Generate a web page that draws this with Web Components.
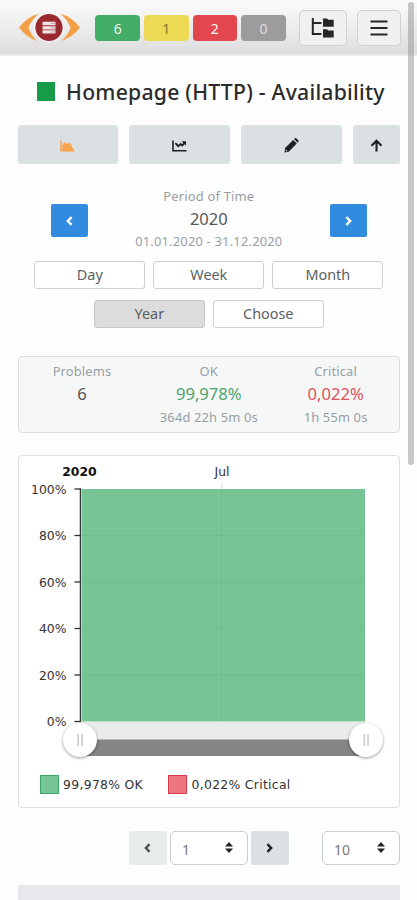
<!DOCTYPE html>
<html lang="en">
<head>
<meta charset="utf-8">
<meta name="viewport" content="width=device-width, initial-scale=1">
<title>Homepage (HTTP) - Availability</title>
<style>
  html, body {
    margin: 0;
    height: 100%;
    overflow: hidden;
    background: #fefefe;
  }
</style>
</head>
<body>
<monitor-app></monitor-app>

<script>
  class BaseElement extends HTMLElement {
    constructor() {
      super();
      this.attachShadow({ mode: "open" });
    }

    connectedCallback() {
      this.shadowRoot.innerHTML = this.render();
    }
  }

  const icons = {
    area: `<svg width="15" height="12" viewBox="0 0 15 12"><path d="M1 .5V10.8H14.5" fill="none" stroke="currentColor" stroke-width="1.5"/><path d="M2.4 10V5L4.6 2L7 4L9.6 2.6L11.4 5.4L13.6 10Z" fill="currentColor"/></svg>`,
    line: `<svg width="15" height="12" viewBox="0 0 15 12"><path d="M1 .5V10.8H14.5" fill="none" stroke="currentColor" stroke-width="1.6"/><path d="M3.4 3.2L6.2 6.2L8.6 4L10.2 5.4L12.6 3" fill="none" stroke="currentColor" stroke-width="1.8"/><path d="M9.6 1.2H14V5.6Z" fill="currentColor"/></svg>`,
    pencil: `<svg width="15" height="15" viewBox="0 0 15 15"><path d="M1 10L9.2 1.9L12.8 5.5L4.7 13.7L.6 14.4Z" fill="currentColor"/><path d="M10 1.1L11 .2Q11.8-.3 12.5 .4L14.3 2.2Q15 3 14.4 3.8L13.6 4.7Z" fill="currentColor"/><path d="M1.7 11.2L3.6 13.1L2 13.4Z" fill="#dbe1e3"/></svg>`,
    up: `<svg width="13" height="13" viewBox="0 0 13 13"><path d="M6.5 12.5V2M1.5 6.7L6.5 1.7L11.5 6.7" fill="none" stroke="currentColor" stroke-width="2.1"/></svg>`,
    left: `<svg width="7" height="10" viewBox="0 0 7 10"><path d="M5.6 1.2L1.9 5L5.6 8.8" fill="none" stroke="currentColor" stroke-width="2.5"/></svg>`,
    right: `<svg width="7" height="10" viewBox="0 0 7 10"><path d="M1.4 1.2L5.1 5L1.4 8.8" fill="none" stroke="currentColor" stroke-width="2.5"/></svg>`,
    tree: `<svg width="23" height="20" viewBox="0 0 23 20"><path d="M1.8 0V16H10.5M1.8 5H10.5" fill="none" stroke="currentColor" stroke-width="2"/><path d="M12 .6H16L17.2 1.8H22.7V8.8H12ZM12 11.2H16L17.2 12.4H22.7V19.4H12Z" fill="currentColor"/></svg>`,
    menu: `<svg width="18" height="16" viewBox="0 0 18 16"><path d="M.5 1.5H17.5M.5 8H17.5M.5 14.5H17.5" fill="none" stroke="currentColor" stroke-width="2.1"/></svg>`,
    sort: `<svg width="8" height="11" viewBox="0 0 8 11"><path d="M0 4.6L4 0L8 4.6ZM0 6.4L4 11L8 6.4Z" fill="currentColor"/></svg>`
  };

  class UiIcon extends BaseElement {
    render() {
      return `
        <style>
          :host { display: inline-flex; }
          svg { display: block; overflow: visible; }
        </style>
        ${icons[this.getAttribute("name")]}
      `;
    }
  }
  customElements.define("ui-icon", UiIcon);

  class AppLogo extends BaseElement {
    render() {
      return `
        <style>
          :host { display: block; width: 62px; height: 30px; }
          svg { display: block; }
        </style>
        <svg width="62" height="30" viewBox="0 0 62 30">
          <path d="M0 14.5Q8 4 20 .5Q13 6 9.5 14.5Q12.5 23 18 28Q7 24 0 14.5Z" fill="#f5a047"/>
          <path d="M61 14.5Q53 4 41 .5Q48 6 51.5 14.5Q48.5 23 42 28Q54 24 61 14.5Z" fill="#f5a047"/>
          <circle cx="30" cy="14.5" r="15" fill="#f6f3f3"/>
          <circle cx="30" cy="14.5" r="13.6" fill="#98292f"/>
          <path d="M23.5 8.7H36.5V12.3H23.5ZM23.5 13.2H36.5V16.4H23.5ZM23.5 17.3H36.5V20.6H23.5Z" fill="#f2e3e3"/>
          <path d="M32 10.5H36M32 14.8H36M32 19H36" stroke="#c99a9c" stroke-width=".8"/>
        </svg>
      `;
    }
  }
  customElements.define("app-logo", AppLogo);

  class StatusBadge extends BaseElement {
    render() {
      return `
        <style>
          :host {
            display: flex;
            align-items: center;
            justify-content: center;
            width: 44.6px;
            height: 26px;
            border-radius: 4px;
            background: var(--badge-bg);
            color: var(--badge-text, #eef6f0);
            font-size: 14px;
          }
        </style>
        <slot></slot>
      `;
    }
  }
  customElements.define("status-badge", StatusBadge);

  class AppHeader extends BaseElement {
    render() {
      return `
        <style>
          :host {
            display: flex;
            align-items: center;
            box-sizing: border-box;
            height: 56px;
            padding: 0 15px 0 19px;
            background: linear-gradient(#fcfcfc, #ececec 50%, #dedede 94%, #eee);
          }
          .badges { display: flex; gap: 4px; margin: 0 12.8px 0 14.4px; }
          .button {
            display: flex;
            align-items: center;
            justify-content: center;
            box-sizing: border-box;
            width: 48px;
            height: 36px;
            border: 1px solid #cfd2d4;
            border-radius: 5px;
            background: #f0f0f0;
            color: #262626;
          }
          .menu { width: 44px; margin-left: 10px; }
        </style>
        <app-logo></app-logo>
        <div class="badges">
          <status-badge style="--badge-bg: #41ad67">6</status-badge>
          <status-badge style="--badge-bg: #ecda55; --badge-text: #85792f">1</status-badge>
          <status-badge style="--badge-bg: #e2464f">2</status-badge>
          <status-badge style="--badge-bg: #9c9c9c; --badge-text: #ddd">0</status-badge>
        </div>
        <div class="button"><ui-icon name="tree"></ui-icon></div>
        <div class="button menu"><ui-icon name="menu"></ui-icon></div>
      `;
    }
  }
  customElements.define("app-header", AppHeader);

  class PageTitle extends BaseElement {
    render() {
      return `
        <style>
          :host {
            display: flex;
            align-items: center;
            height: 30px;
            margin: 21px 0 17.5px 19px;
            color: #2b2b2b;
            font-size: 21.2px;
            font-weight: 500;
            letter-spacing: .24px;
            white-space: nowrap;
          }
          .state { width: 18.5px; height: 19px; margin: 0 11px 1px 0; background: #169b48; }
          .text { margin-top: -2px; }
        </style>
        <span class="state"></span>
        <span class="text"><slot></slot></span>
      `;
    }
  }
  customElements.define("page-title", PageTitle);

  class ToolBar extends BaseElement {
    render() {
      return `
        <style>
          :host {
            display: grid;
            grid-template-columns: 1fr 1fr 1fr 47px;
            gap: 11px;
            height: 39px;
            color: #1d1f20;
          }
          div {
            display: flex;
            align-items: center;
            justify-content: center;
            padding-top: 3px;
            box-sizing: border-box;
            border-radius: 3px;
            background: #dbe1e3;
          }
          .active { color: #f9a14b; }
        </style>
        <div class="active"><ui-icon name="area"></ui-icon></div>
        <div><ui-icon name="line"></ui-icon></div>
        <div><ui-icon name="pencil"></ui-icon></div>
        <div><ui-icon name="up"></ui-icon></div>
      `;
    }
  }
  customElements.define("tool-bar", ToolBar);

  class PeriodPicker extends BaseElement {
    render() {
      return `
        <style>
          :host { display: block; margin-top: 21.5px; }
          .period {
            display: flex;
            justify-content: space-between;
            align-items: flex-start;
            padding: 0 33px;
            text-align: center;
          }
          .arrow {
            display: flex;
            align-items: center;
            justify-content: center;
            width: 37.5px;
            height: 33px;
            margin-top: 19px;
            border-radius: 2px;
            background: #318ce0;
            color: #fff;
          }
          .text { color: #98a0a5; font-size: 12.9px; letter-spacing: .2px; }
          .text div { height: 22px; line-height: 22px; }
          .text .value { height: 23px; line-height: 24px; color: #555; font-size: 16.5px; letter-spacing: 0; }
          .ranges {
            display: flex;
            flex-wrap: wrap;
            justify-content: center;
            gap: 10.5px 8px;
            margin-top: 8.5px;
          }
          .ranges div {
            box-sizing: border-box;
            width: 111px;
            height: 28.5px;
            border: 1px solid #ccd0d2;
            border-radius: 3px;
            background: #fff;
            color: #5c5f61;
            font-size: 14.4px;
            line-height: 26px;
            text-align: center;
          }
          .ranges .selected { background: #dcdcdc; border-color: #c6c8c9; }
        </style>
        <div class="period">
          <div class="arrow"><ui-icon name="left"></ui-icon></div>
          <div class="text">
            <div>Period of Time</div>
            <div class="value">2020</div>
            <div>01.01.2020 - 31.12.2020</div>
          </div>
          <div class="arrow"><ui-icon name="right"></ui-icon></div>
        </div>
        <div class="ranges">
          <div>Day</div>
          <div>Week</div>
          <div>Month</div>
          <div class="selected">Year</div>
          <div>Choose</div>
        </div>
      `;
    }
  }
  customElements.define("period-picker", PeriodPicker);

  class StatItem extends BaseElement {
    render() {
      return `
        <style>
          :host {
            display: block;
            color: #979fa4;
            font-size: 12.9px;
            letter-spacing: .15px;
            line-height: 22px;
            text-align: center;
            white-space: nowrap;
          }
          .value { color: var(--value-color, #555); font-size: 16.6px; letter-spacing: 0; line-height: 24px; }
        </style>
        <div>${this.getAttribute("label")}</div>
        <div class="value">${this.getAttribute("value")}</div>
        <slot></slot>
      `;
    }
  }
  customElements.define("stat-item", StatItem);

  class StatsPanel extends BaseElement {
    render() {
      return `
        <style>
          :host {
            display: grid;
            grid-template-columns: 1fr 1fr 1fr;
            box-sizing: border-box;
            height: 76.5px;
            margin-top: 28px;
            padding-top: 3px;
            border: 1.5px solid #d9dddf;
            border-radius: 4px;
            background: #f6f7f7;
          }
        </style>
        <stat-item label="Problems" value="6"></stat-item>
        <stat-item label="OK" value="99,978%" style="--value-color: #4ea46e">364d 22h 5m 0s</stat-item>
        <stat-item label="Critical" value="0,022%" style="--value-color: #dd515b">1h 55m 0s</stat-item>
      `;
    }
  }
  customElements.define("stats-panel", StatsPanel);

  class AvailabilityChart extends BaseElement {
    render() {
      const top = 33;
      const step = 46.5;
      const ticks = [100, 80, 60, 40, 20, 0].map((value, i) => {
        const y = top + i * step;
        return `
          <path d="M55.5 ${y}H62" stroke="#333" stroke-width="1.3"/>
          <text x="47.5" y="${y + 4.5}" text-anchor="end">${value}%</text>
          ${i > 0 && i < 5 ? `<path d="M63 ${y}H346" stroke="#6fbf8d"/>` : ""}
        `;
      }).join("");
      const handle = (x) => `
        <circle class="handle" cx="${x}" cy="284" r="17" fill="#fff"/>
        <path d="M${x - 1.8} 278V290M${x + 2} 278V290" stroke="#c4c4c4" stroke-width="1.4"/>
      `;

      return `
        <style>
          :host {
            display: block;
            box-sizing: border-box;
            height: 353.5px;
            margin-top: 22px;
            border: 1.5px solid #dcdedf;
            border-radius: 4px;
            background: #fff;
            font-family: "DejaVu Sans", sans-serif;
            font-size: 12.4px;
            color: #333;
          }
          svg { display: block; overflow: visible; }
          text { fill: #333; }
          .handle { filter: drop-shadow(0 1px 1.5px rgba(0, 0, 0, .4)); }
          .legend {
            display: flex;
            gap: 25px;
            padding-left: 21px;
            margin-top: 12px;
            letter-spacing: .3px;
          }
          .legend div { display: flex; align-items: center; height: 20px; white-space: nowrap; }
          i {
            box-sizing: border-box;
            width: 19px;
            height: 19.5px;
            margin-right: 4.5px;
            border: 1.2px solid #3aa863;
            background: #77c594;
          }
          .critical i { border-color: #d9394a; background: #ec7780; }
        </style>
        <svg width="380" height="307" viewBox="0 0 380 307">
          <path d="M203 27V33" stroke="#ddd"/>
          <path d="M63 33H346V265.5H63Z" fill="#77c594"/>
          <path d="M202.5 33V265" stroke="#6fbf8d"/>
          <text x="60.5" y="20" text-anchor="middle" font-weight="bold" style="fill: #111">2020</text>
          <text x="203" y="20" text-anchor="middle">Jul</text>
          ${ticks}
          <path d="M61.5 32.5V266" stroke="#333" stroke-width="1.5"/>
          <path d="M61 266H346V284H61Z" fill="#ebebea"/>
          <path d="M61 283.5H346V300H61Z" fill="#858585"/>
          ${handle(61)}
          ${handle(347)}
        </svg>
        <div class="legend">
          <div><i></i>99,978% OK</div>
          <div class="critical"><i></i>0,022% Critical</div>
        </div>
      `;
    }
  }
  customElements.define("availability-chart", AvailabilityChart);

  class TablePager extends BaseElement {
    render() {
      return `
        <style>
          :host {
            display: flex;
            justify-content: flex-end;
            height: 34px;
            margin-top: 22.5px;
          }
          div {
            display: flex;
            align-items: center;
            box-sizing: border-box;
          }
          .button {
            justify-content: center;
            width: 37.5px;
            background: #dbe1e3;
            color: #222;
            border-radius: 2px;
          }
          .disabled { background: #e8ecec; color: #555; }
          .select {
            justify-content: space-between;
            width: 78px;
            margin: 0 3px 0 3.5px;
            padding: 3px 14px 0 11px;
            border: 1px solid #c9ced1;
            border-radius: 5px;
            background: #fff;
            color: #777;
            font-size: 14px;
          }
          .select ui-icon { color: #222; margin-top: -3px; }
          .size { margin: 0 0 0 33.4px; }
        </style>
        <div class="button disabled"><ui-icon name="left"></ui-icon></div>
        <div class="select">1<ui-icon name="sort"></ui-icon></div>
        <div class="button"><ui-icon name="right"></ui-icon></div>
        <div class="select size">10<ui-icon name="sort"></ui-icon></div>
      `;
    }
  }
  customElements.define("table-pager", TablePager);

  class MonitorApp extends BaseElement {
    render() {
      return `
        <style>
          :host {
            display: block;
            position: relative;
            height: 900px;
            overflow: hidden;
            font-family: "Noto Sans", "Open Sans", sans-serif;
          }
          main { margin: 0 17px 0 17.6px; }
          .table-head { height: 20px; margin-top: 20px; background: #e7e8eb; }
          /* overlay scrollbar, floats above the content */
          .scrollbar {
            position: absolute;
            top: 2px;
            right: 3px;
            width: 6px;
            height: 463px;
            border-radius: 3px;
            background: rgba(150, 150, 150, .52);
          }
        </style>
        <app-header></app-header>
        <main>
          <page-title>Homepage (HTTP) - Availability</page-title>
          <tool-bar></tool-bar>
          <period-picker></period-picker>
          <stats-panel></stats-panel>
          <availability-chart></availability-chart>
          <table-pager></table-pager>
          <div class="table-head"></div>
        </main>
        <div class="scrollbar"></div>
      `;
    }
  }
  customElements.define("monitor-app", MonitorApp);
</script>
</body>
</html>
